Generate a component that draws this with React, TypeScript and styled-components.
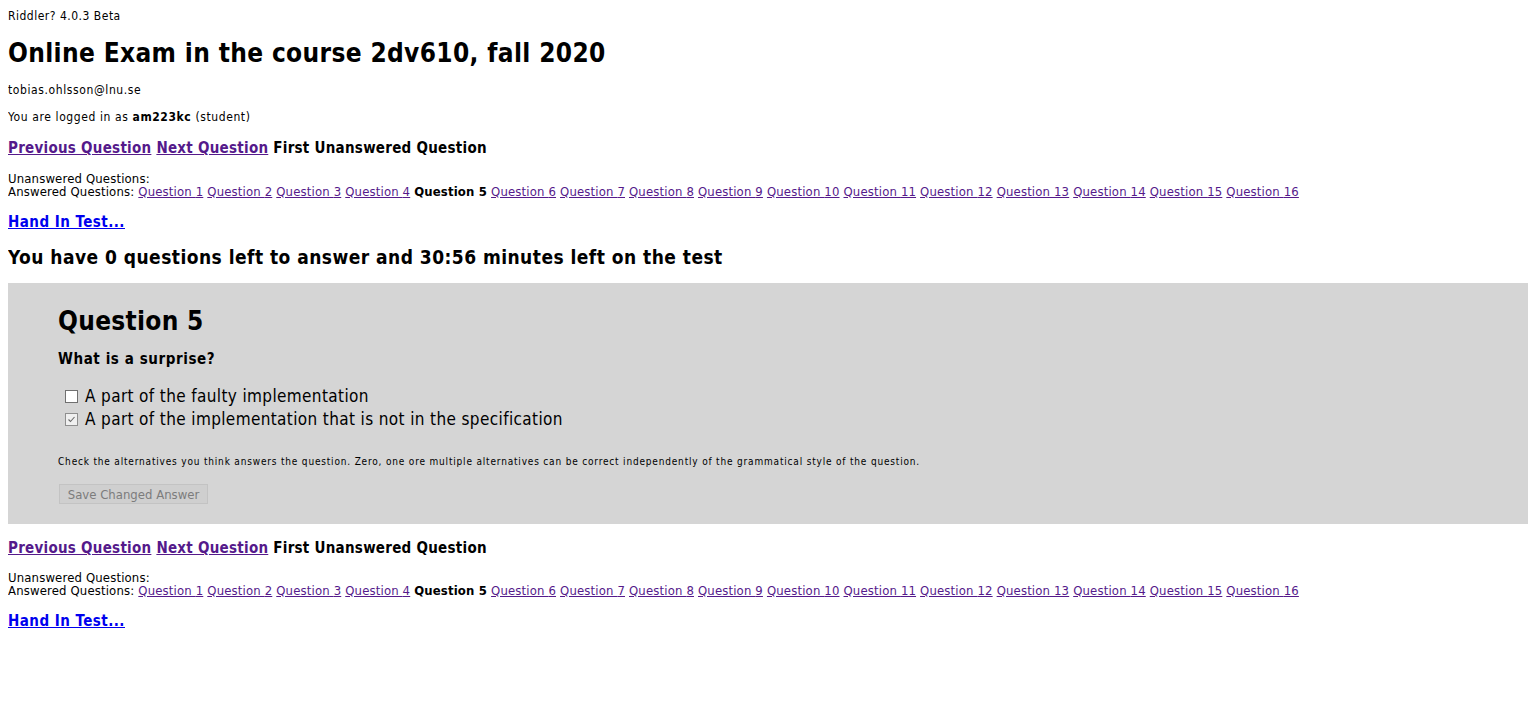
import React from "react";
import styled, { createGlobalStyle } from "styled-components";

const FONT = `"DejaVu Sans Condensed", "DejaVu Sans", Tahoma, sans-serif`;

const Global = createGlobalStyle`
  html, body { background: #ffffff; }
  body {
    margin: 8px;
    font-family: ${FONT};
    color: #000;
  }
`;

const Version = styled.div`
  margin-top: 1px;
  font-size: 12px;
  line-height: 14px;
  letter-spacing: 0.5px;
`;

const Title = styled.h1`
  margin: 14px 0 0;
  font-size: 26px;
  line-height: 32px;
  font-weight: bold;
  letter-spacing: 0.35px;
`;

const Small = styled.div<{ $mt: number }>`
  margin-top: ${(p) => p.$mt}px;
  font-size: 12px;
  line-height: 14px;
  letter-spacing: 0.6px;
`;

const Nav = styled.div<{ $mt: number }>`
  margin-top: ${(p) => p.$mt}px;
  font-size: 15px;
  line-height: 18px;
  font-weight: bold;
  letter-spacing: 0.26px;
  display: flex;
  gap: 5px;
`;

const VisitedLink = styled.a`
  color: #551a8b;
  text-decoration: underline;
  cursor: pointer;
`;

const BlueLink = styled.a`
  color: #0000ee;
  text-decoration: underline;
  cursor: pointer;
`;

const QList = styled.div<{ $mt: number }>`
  margin-top: ${(p) => p.$mt}px;
  font-size: 13px;
  line-height: 13px;
  letter-spacing: 0.15px;
`;

const QRow = styled.div`
  display: flex;
  flex-wrap: wrap;
  gap: 4px;
`;

const Current = styled.b`
  font-weight: bold;
`;

const HandIn = styled.div`
  margin-top: 15px;
  font-size: 15px;
  line-height: 18px;
  font-weight: bold;
  letter-spacing: 0.47px;
`;

const Status = styled.h2`
  margin: 14px 0 0;
  font-size: 19px;
  line-height: 24px;
  font-weight: bold;
  letter-spacing: 0.46px;
`;

const QuestionBox = styled.section`
  margin-top: 14px;
  background: #d5d5d5;
  padding: 22px 50px 20px;
`;

const QTitle = styled.h2`
  margin: 0;
  font-size: 26px;
  line-height: 32px;
  font-weight: bold;
  letter-spacing: 0.3px;
`;

const Prompt = styled.div`
  margin-top: 13px;
  font-size: 15px;
  line-height: 18px;
  font-weight: bold;
  letter-spacing: 0.58px;
`;

const Options = styled.div`
  margin-top: 17px;
  display: flex;
  flex-direction: column;
`;

const Option = styled.label`
  display: flex;
  align-items: center;
  height: 23px;
  font-size: 17px;
  line-height: 23px;
  letter-spacing: 0.37px;
`;

const Box = styled.span<{ $checked: boolean }>`
  box-sizing: border-box;
  width: 13px;
  height: 13px;
  margin: 0 7px 0 7px;
  border: 1px solid ${(p) => (p.$checked ? "#8f8f8f" : "#707070")};
  background: ${(p) => (p.$checked ? "#f0f0f0" : "#ffffff")};
  display: inline-flex;
  align-items: center;
  justify-content: center;
`;

const Help = styled.div`
  margin-top: 25px;
  font-size: 10px;
  line-height: 12px;
  letter-spacing: 0.82px;
`;

const SaveButton = styled.button`
  display: block;
  margin: 16px 0 0 1px;
  height: 20px;
  width: 149px;
  padding: 0;
  font-family: ${FONT};
  font-size: 13px;
  color: #7c7c7c;
  background: #cfcfcf;
  border: 1px solid #c3c3c3;
  border-radius: 0;
`;

const questions = Array.from({ length: 16 }, (_, i) => i + 1);

function CheckBox({ checked }: { checked: boolean }) {
  return (
    <Box $checked={checked}>
      {checked && (
        <svg width="9" height="9" viewBox="0 0 9 9">
          <path d="M1.5 4.5 L3.5 6.5 L7.5 2" fill="none" stroke="#6a6a6a" strokeWidth="1.1" />
        </svg>
      )}
    </Box>
  );
}

function NavLinks({ mt }: { mt: number }) {
  return (
    <Nav $mt={mt}>
      <VisitedLink>Previous Question</VisitedLink>
      <VisitedLink>Next Question</VisitedLink>
      <span>First Unanswered Question</span>
    </Nav>
  );
}

function QuestionLists({ mt }: { mt: number }) {
  return (
    <QList $mt={mt}>
      <div>Unanswered Questions:</div>
      <QRow>
        <span>Answered Questions:</span>
        {questions.map((n) =>
          n === 5 ? (
            <Current key={n}>Question {n}</Current>
          ) : (
            <VisitedLink key={n}>Question {n}</VisitedLink>
          )
        )}
      </QRow>
    </QList>
  );
}

export default function App() {
  return (
    <>
      <Global />
      <Version>Riddler? 4.0.3 Beta</Version>
      <Title>Online Exam in the course 2dv610, fall 2020</Title>
      <Small $mt={14}>tobias.ohlsson@lnu.se</Small>
      <Small $mt={13}>
        You are logged in as <b>am223kc</b> (student)
      </Small>
      <NavLinks mt={15} />
      <QuestionLists mt={15} />
      <HandIn>
        <BlueLink>Hand In Test...</BlueLink>
      </HandIn>
      <Status>You have 0 questions left to answer and 30:56 minutes left on the test</Status>
      <QuestionBox>
        <QTitle>Question 5</QTitle>
        <Prompt>What is a surprise?</Prompt>
        <Options>
          <Option>
            <CheckBox checked={false} />
            A part of the faulty implementation
          </Option>
          <Option>
            <CheckBox checked={true} />
            A part of the implementation that is not in the specification
          </Option>
        </Options>
        <Help>
          Check the alternatives you think answers the question. Zero, one ore multiple alternatives can be correct independently of the grammatical style of the question.
        </Help>
        <SaveButton disabled>Save Changed Answer</SaveButton>
      </QuestionBox>
      <NavLinks mt={15} />
      <QuestionLists mt={14} />
      <HandIn>
        <BlueLink>Hand In Test...</BlueLink>
      </HandIn>
    </>
  );
}
